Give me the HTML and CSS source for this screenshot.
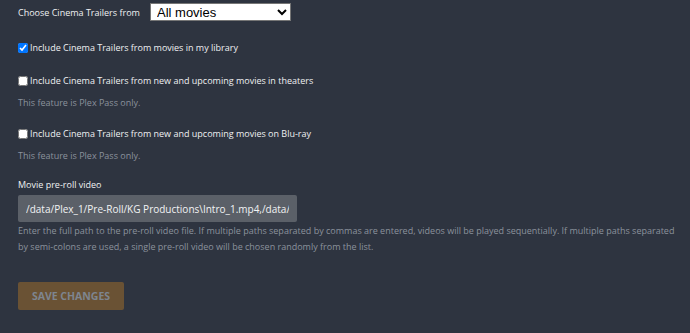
FILE: index.html
```html
<!DOCTYPE html>
<html lang="en">
<head>
    <meta charset="UTF-8">
    <title>Extras</title>
    <link rel="stylesheet" href="styles.css">
</head>
<body>
    <main class="settings">
        <div class="row">
            <label class="row-label" for="trailerSource">Choose Cinema Trailers from</label>
            <select id="trailerSource" class="select">
                <option>All movies</option>
                <option>Only unwatched movies</option>
                <option>Only recently added movies</option>
            </select>
        </div>

        <div class="check">
            <input type="checkbox" id="libTrailers" checked>
            <label for="libTrailers">Include Cinema Trailers from movies in my library</label>
        </div>

        <div class="check">
            <input type="checkbox" id="theaterTrailers">
            <label for="theaterTrailers">Include Cinema Trailers from new and upcoming movies in theaters</label>
        </div>
        <p class="help">This feature is Plex Pass only.</p>

        <div class="check">
            <input type="checkbox" id="blurayTrailers">
            <label for="blurayTrailers">Include Cinema Trailers from new and upcoming movies on Blu-ray</label>
        </div>
        <p class="help">This feature is Plex Pass only.</p>

        <div class="field">
            <label class="field-label" for="preroll">Movie pre-roll video</label>
            <input type="text" id="preroll" class="text-input" value="/data/Plex_1/Pre-Roll/KG Productions\Intro_1.mp4,/data/Plex_1/Pre-Roll/KG Productions\Intro_2.mp4">
            <p class="help help-long">Enter the full path to the pre-roll video file. If multiple paths separated by commas are entered, videos will be played sequentially. If multiple paths separated by semi-colons are used, a single pre-roll video will be chosen randomly from the list.</p>
        </div>

        <button class="save" disabled>Save Changes</button>
    </main>
</body>
</html>
```

FILE: styles.css
```css
body {
    margin: 0;
    background-color: #2e3440;
    font-family: "Open Sans", sans-serif;
    color: #eef0f2;
}
.settings {
    padding: 3px 0 0 18px;
}
.row {
    display: flex;
    align-items: center;
    height: 18px;
}
.row-label {
    font-size: 9px;
    width: 132px;
}
.select {
    width: 141px;
    height: 18px;
    font-family: "Liberation Sans", Arial, sans-serif;
    font-size: 13px;
    padding: 0 2px;
    border: 1px solid #767676;
    border-radius: 0;
    background-color: #fff;
    color: #000;
}
.check {
    display: flex;
    align-items: center;
    margin-top: 20px;
    font-size: 9px;
}
.help + .check {
    margin-top: 16px;
}
.check input {
    margin: 0 2px 0 0;
    width: 10px;
    height: 10px;
}
.help {
    margin: 8px 0 0;
    font-size: 9px;
    color: #8b929c;
    line-height: 16px;
}
.field {
    margin-top: 14px;
}
.field-label {
    display: block;
    font-size: 9px;
    margin-bottom: 4px;
}
.text-input {
    display: block;
    box-sizing: border-box;
    width: 279px;
    height: 27px;
    padding: 0 8px;
    border: none;
    border-radius: 2px;
    background-color: #5b6068;
    color: #f2f3f4;
    font-family: "Open Sans", sans-serif;
    font-size: 10px;
}
.help-long {
    margin-top: 1px;
    padding-right: 10px;
}
.save {
    margin-top: 27px;
    width: 106px;
    height: 28px;
    border: none;
    border-radius: 2px;
    background-color: #6a5234;
    color: #7e858f;
    font-family: "Open Sans", sans-serif;
    font-weight: bold;
    font-size: 10.5px;
    text-transform: uppercase;
}
```
